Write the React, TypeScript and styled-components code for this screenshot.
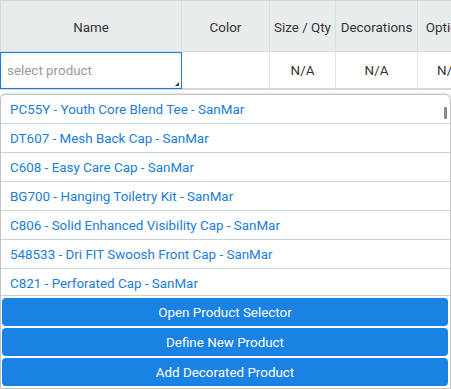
import React from "react";
import styled, { createGlobalStyle } from "styled-components";

const Global = createGlobalStyle`
  html, body { margin: 0; padding: 0; background: #fff; overflow: hidden; }
  body { font-family: Roboto, "Liberation Sans", Arial, sans-serif; font-size: 13.4px; color: #333; }
  * { box-sizing: border-box; }
`;

const COLS = "181px 88px 66px 82px 62px";
const FS = "13.4px";

const Page = styled.div`
  width: 451px;
  height: 389px;
  overflow: hidden;
  position: relative;
`;

const Table = styled.div`
  width: 480px;
  border-top: 1px solid #d5d9d9;
  border-left: 1px solid #d5d9d9;
`;

const HeaderRow = styled.div`
  display: grid;
  grid-template-columns: ${COLS};
  height: 51px;
  background: #e9ecec;
  border-bottom: 1px solid #d8dcdc;
`;

const HeaderCell = styled.div<{ $last?: boolean }>`
  display: flex;
  align-items: center;
  justify-content: center;
  border-right: ${(p) => (p.$last ? "none" : "1px solid #dadede")};
  color: #333;
  font-size: ${FS};
  white-space: nowrap;
  padding-top: 2px;
`;

const BodyRow = styled.div`
  display: grid;
  grid-template-columns: ${COLS};
  height: 38px;
  border-bottom: 2px solid #d6d6d6;
`;

const Cell = styled.div<{ $last?: boolean }>`
  display: flex;
  align-items: center;
  justify-content: center;
  border-right: ${(p) => (p.$last ? "none" : "1px solid #e4e6e6")};
  color: #333;
  font-size: ${FS};
  white-space: nowrap;
`;

const InputCell = styled.div`
  display: flex;
  margin-left: -1px;
  position: relative;
  &::after {
    content: "";
    position: absolute;
    right: 3px;
    bottom: 3px;
    width: 0;
    height: 0;
    border-left: 4px solid transparent;
    border-bottom: 4px solid #444;
  }
`;

const ProductInput = styled.textarea`
  width: 182px;
  height: 37px;
  border: 1px solid #1a7fd8;
  padding: 10px 6px 0;
  font-family: Roboto, "Liberation Sans", Arial, sans-serif;
  font-size: ${FS};
  color: #333;
  resize: none;
  outline: none;
  box-shadow: inset 0 0 4px rgba(0, 0, 0, 0.08);
  overflow: hidden;
  line-height: 16px;
  &::placeholder { color: #9a9a9a; }
`;

const Dropdown = styled.div`
  position: absolute;
  left: 0;
  top: 94px;
  width: 451px;
  height: 295px;
  border: 1px solid #c4c4c4;
  border-radius: 5px 6px 0 0;
  background: #fff;
  box-shadow: 0 -1px 2px rgba(0, 0, 0, 0.12);
  display: flex;
  flex-direction: column;
`;

const List = styled.div`
  position: relative;
  height: 201px;
  overflow: hidden;
  border-bottom: 1px solid #cfcfcf;
`;

const Item = styled.div`
  height: 29px;
  display: flex;
  align-items: center;
  padding-left: 9px;
  color: #1b7dd8;
  font-size: ${FS};
  border-bottom: 1px solid #c9d6d6;
  white-space: nowrap;
`;

const Thumb = styled.div`
  position: absolute;
  right: 3px;
  top: 12px;
  width: 3px;
  height: 12px;
  background: #8a8a8a;
  border-radius: 1px;
`;

const Buttons = styled.div`
  display: flex;
  flex-direction: column;
  gap: 2px;
  padding: 2px 2px 0 1px;
`;

const ActionButton = styled.button`
  height: 28px;
  border: none;
  border-radius: 4px;
  background: #1a82e2;
  color: #fff;
  font-family: Roboto, "Liberation Sans", Arial, sans-serif;
  font-size: ${FS};
  cursor: pointer;
  padding: 0;
`;

const products = [
  "PC55Y - Youth Core Blend Tee - SanMar",
  "DT607 - Mesh Back Cap - SanMar",
  "C608 - Easy Care Cap - SanMar",
  "BG700 - Hanging Toiletry Kit - SanMar",
  "C806 - Solid Enhanced Visibility Cap - SanMar",
  "548533 - Dri FIT Swoosh Front Cap - SanMar",
  "C821 - Perforated Cap - SanMar",
];

export default function App() {
  return (
    <Page>
      <Global />
      <Table>
        <HeaderRow>
          <HeaderCell>Name</HeaderCell>
          <HeaderCell>Color</HeaderCell>
          <HeaderCell>Size / Qty</HeaderCell>
          <HeaderCell>Decorations</HeaderCell>
          <HeaderCell $last>Options</HeaderCell>
        </HeaderRow>
        <BodyRow>
          <InputCell>
            <ProductInput placeholder="select product" />
          </InputCell>
          <Cell />
          <Cell>N/A</Cell>
          <Cell>N/A</Cell>
          <Cell $last>N/A</Cell>
        </BodyRow>
      </Table>
      <Dropdown>
        <List>
          {products.map((p) => (
            <Item key={p}>{p}</Item>
          ))}
          <Thumb />
        </List>
        <Buttons>
          <ActionButton>Open Product Selector</ActionButton>
          <ActionButton>Define New Product</ActionButton>
          <ActionButton>Add Decorated Product</ActionButton>
        </Buttons>
      </Dropdown>
    </Page>
  );
}
